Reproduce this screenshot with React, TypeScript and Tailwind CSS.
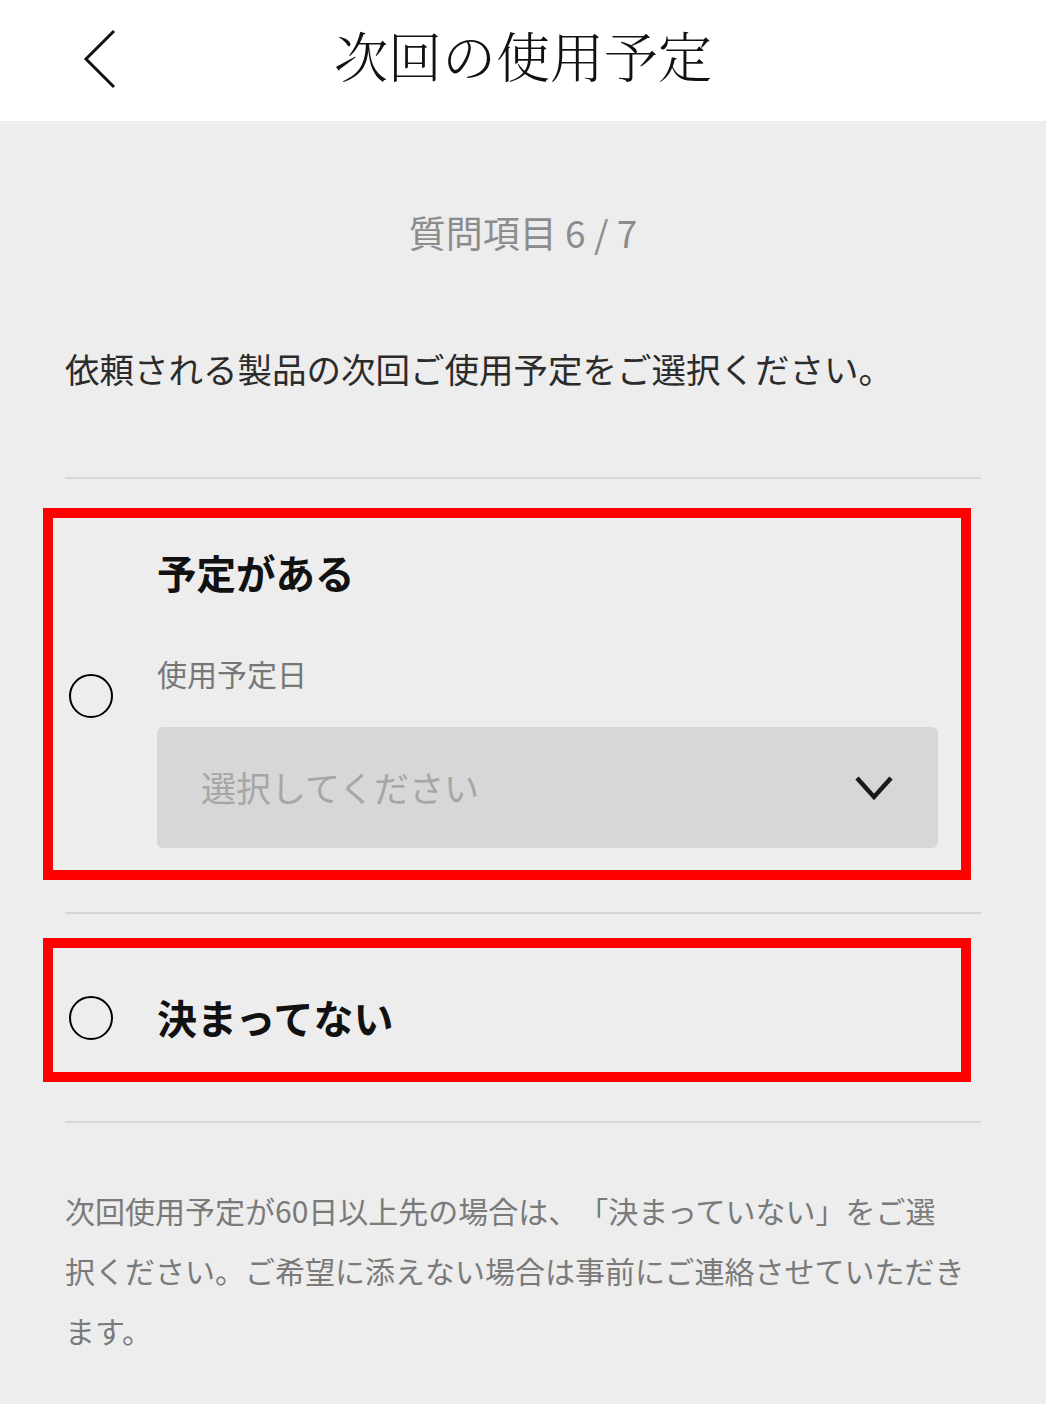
import { ReactNode } from 'react';

const FONT = '"Noto Sans CJK JP", "Noto Sans", sans-serif';

function Radio() {
  return <div className="ml-1 h-11 w-11 shrink-0 rounded-full border-2 border-black" />;
}

function Row({ children, frame }: { children: ReactNode; frame: string }) {
  return (
    <div className="relative flex items-center">
      <Radio />
      <div className="ml-[44px] flex-1">{children}</div>
      <div className={`pointer-events-none absolute left-[-22px] w-[928px] border-[10px] border-[#ff0000] ${frame}`} />
    </div>
  );
}

export default function App() {
  return (
    <div className="min-h-[1404px] bg-[#ededed] [text-spacing-trim:space-all]" style={{ fontFamily: FONT }}>
      <header className="relative flex h-[121px] items-center justify-center bg-white">
        <svg className="absolute left-[83px] top-[29px]" width="34" height="60" viewBox="0 0 34 60" fill="none">
          <polyline points="31,2 3,30 31,58" stroke="#111" strokeWidth="3" />
        </svg>
        <h1
          className="mb-3 text-[54px] font-light leading-none text-[#111]"
          style={{ fontFamily: '"Noto Serif CJK JP", "Noto Sans CJK JP", serif' }}
        >
          次回の使用予定
        </h1>
      </header>

      <main className="px-[65px]">
        <p className="pt-[84px] text-center text-[37px] leading-[54px] text-[#8c8c8c]">質問項目 6 / 7</p>
        <p className="mt-[84px] text-[34.5px] leading-[50px] text-[#2b2b2b]">
          依頼される製品の次回ご使用予定をご選択ください。
        </p>
        <div className="mt-[84px] h-[2px] bg-[#d6d6d6]" />

        <Row frame="top-[29px] h-[372px]">
          <div className="pb-[64px] pt-[64px]">
            <p className="text-[39.5px] font-bold leading-[57px] text-[#111]">予定がある</p>
            <p className="mt-[51px] text-[30px] leading-[44px] text-[#777]">使用予定日</p>
            <div className="mr-[43px] mt-[32px] flex h-[121px] items-center justify-between rounded-md bg-[#d7d7d7] pl-[44px] pr-[44px]">
              <span className="text-[35px] text-[#a6a6a6]">選択してください</span>
              <svg width="40" height="26" viewBox="0 0 40 26" fill="none">
                <polyline points="3,3 20,22 37,3" stroke="#1a1a1a" strokeWidth="4.5" />
              </svg>
            </div>
          </div>
        </Row>
        <div className="h-[2px] bg-[#d6d6d6]" />

        <Row frame="top-[24px] h-[144px]">
          <p className="py-[75px] text-[40px] font-bold leading-[57px] text-[#111]">決まってない</p>
        </Row>
        <div className="h-[2px] bg-[#d6d6d6]" />

        <p className="pt-[57px] text-[30px] leading-[60px] text-[#7a7a7a]">
          次回使用予定が60日以上先の場合は、「決まっていない」をご選
          <br />
          択ください。ご希望に添えない場合は事前にご連絡させていただき
          <br />
          ます。
        </p>
      </main>
    </div>
  );
}
